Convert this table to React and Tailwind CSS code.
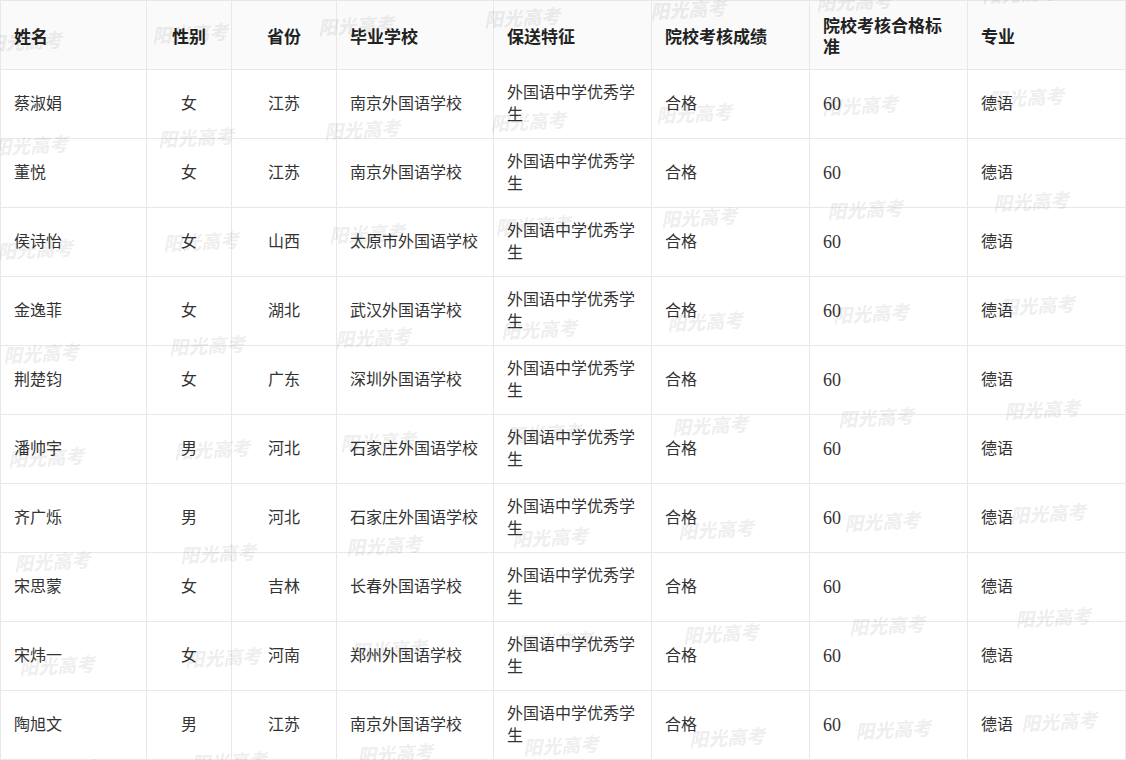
import React from 'react';

const columns = [
  { title: '姓名', width: 'w-[146px]' },
  { title: '性别', width: 'w-[85px]', center: true },
  { title: '省份', width: 'w-[105px]', center: true },
  { title: '毕业学校', width: 'w-[157px]' },
  { title: '保送特征', width: 'w-[158px]' },
  { title: '院校考核成绩', width: 'w-[158px]' },
  { title: '院校考核合格标准', width: 'w-[158px]' },
  { title: '专业', width: 'w-[158px]' },
];

const students = [
  ['蔡淑娟', '女', '江苏', '南京外国语学校'],
  ['董悦', '女', '江苏', '南京外国语学校'],
  ['侯诗怡', '女', '山西', '太原市外国语学校'],
  ['金逸菲', '女', '湖北', '武汉外国语学校'],
  ['荆楚钧', '女', '广东', '深圳外国语学校'],
  ['潘帅宇', '男', '河北', '石家庄外国语学校'],
  ['齐广烁', '男', '河北', '石家庄外国语学校'],
  ['宋思蒙', '女', '吉林', '长春外国语学校'],
  ['宋炜一', '女', '河南', '郑州外国语学校'],
  ['陶旭文', '男', '江苏', '南京外国语学校'],
];

// 水印位置（斜向排布）
const marks = [];
for (let r = 0; r < 8; r++) {
  for (let c = 0; c < 7; c++) {
    marks.push({ x: -14 + 5.5 * r + 166 * c, y: 41 + 104 * r - 8 * c - 12 });
  }
}

const App = () => {
  return (
    <div className="relative w-[1126px] h-[760px] overflow-hidden bg-white font-['Liberation_Serif','Noto_Sans_CJK_SC',sans-serif]">
      <table className="w-[1126px] border-collapse table-fixed">
        <thead>
          <tr className="bg-[#fafafa]">
            {columns.map(col => (
              <th
                key={col.title}
                className={`${col.width} h-[69px] border border-[#e8e8e8] px-[13px] text-[17px] leading-[21px] font-bold text-[#222] font-['Noto_Sans_CJK_SC',sans-serif] ${col.center ? 'text-center' : 'text-left'}`}
              >
                {col.title}
              </th>
            ))}
          </tr>
        </thead>
        <tbody>
          {students.map(s => {
            const cells = [...s, '外国语中学优秀学生', '合格', '60', '德语'];
            return (
              <tr key={s[0]}>
                {cells.map((value, i) => (
                  <td
                    key={i}
                    className={`h-[69px] border border-[#e8e8e8] px-[13px] leading-[22px] text-[#333] align-middle ${i === 6 ? 'text-[18px] text-[#222]' : 'text-[16px]'} ${columns[i].center ? 'text-center' : 'text-left'}`}
                  >
                    {value}
                  </td>
                ))}
              </tr>
            );
          })}
        </tbody>
      </table>

      {/* 水印 */}
      <div className="absolute inset-0 pointer-events-none">
        {marks.map((m, i) => (
          <span
            key={i}
            className="absolute whitespace-nowrap text-[19px] leading-[24px] font-black italic text-[rgba(0,0,0,0.08)] -rotate-3 font-['Noto_Sans_CJK_SC',serif]"
            style={{ left: m.x, top: m.y }}
          >
            阳光高考
          </span>
        ))}
      </div>
    </div>
  );
};

export default App;
